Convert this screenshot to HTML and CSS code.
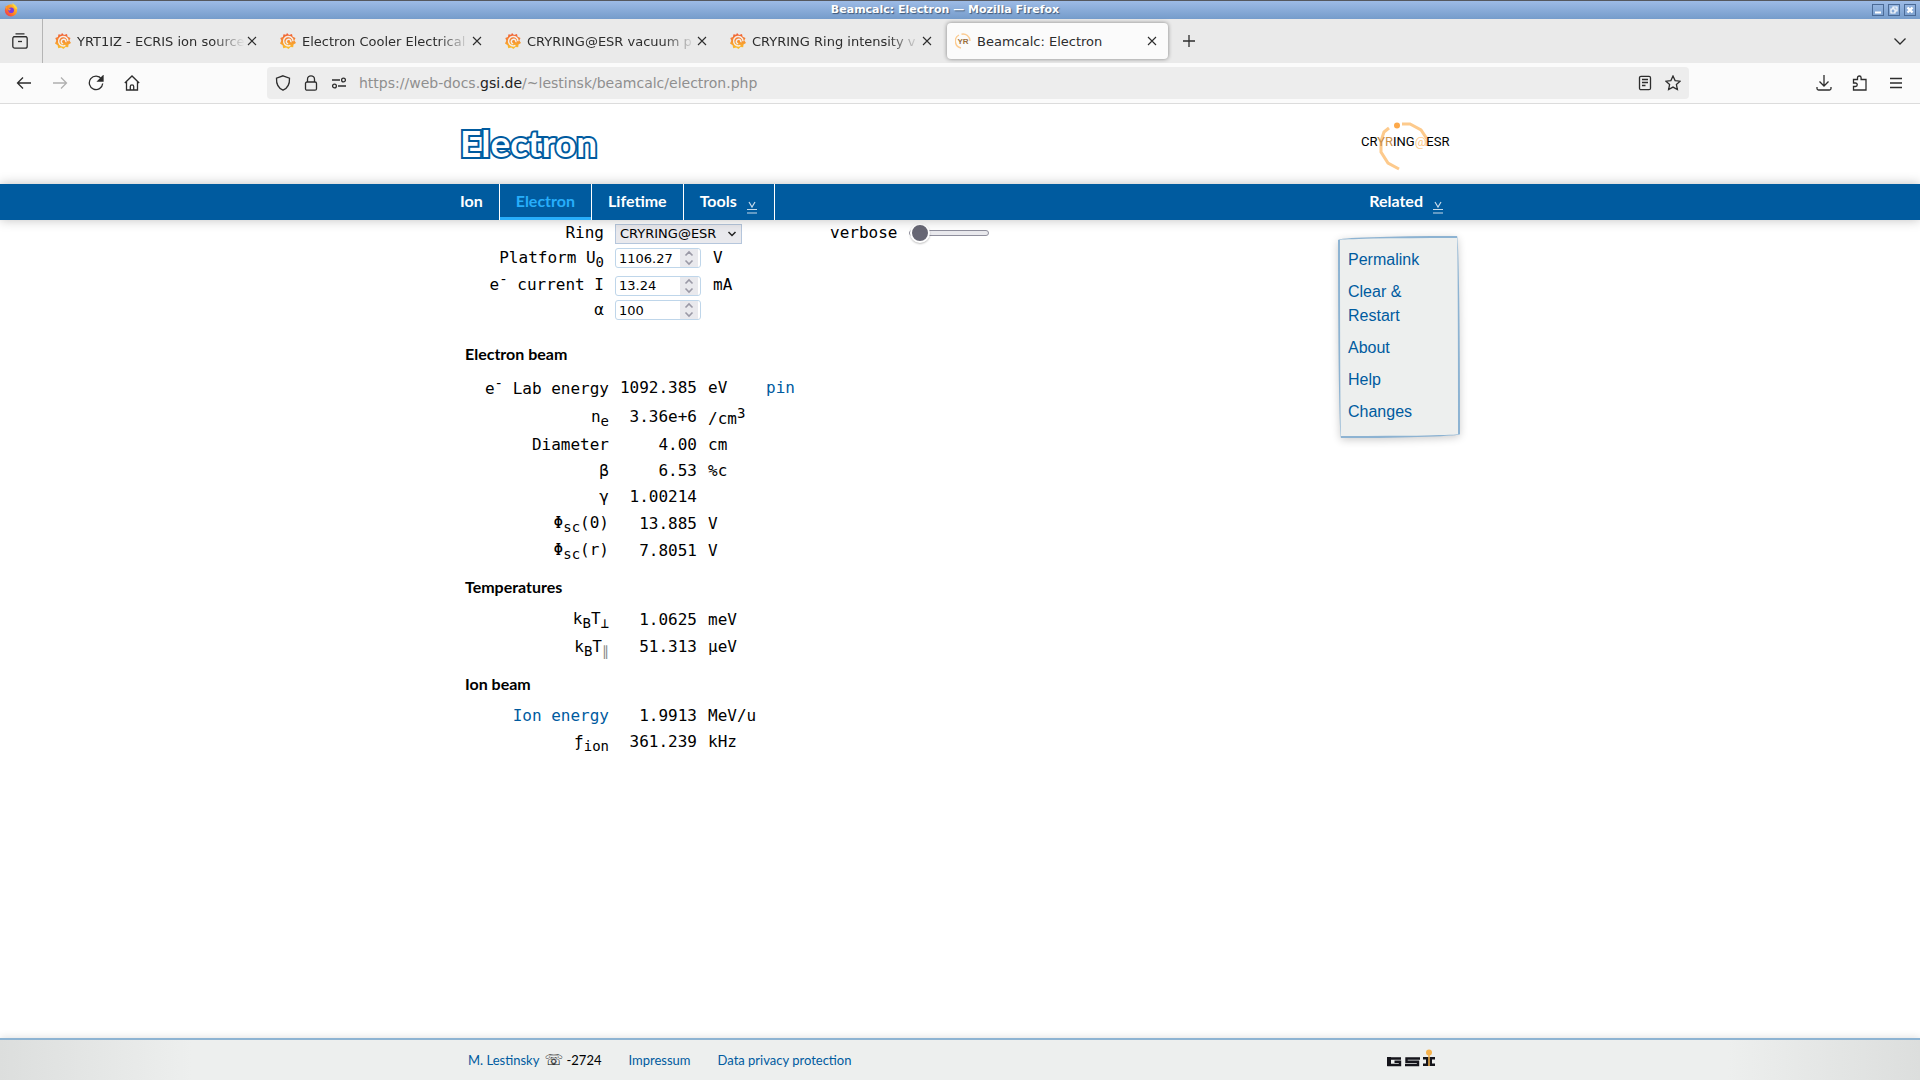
FILE: index.html
```html
<!DOCTYPE html>
<html lang="en">
<head>
  <meta charset="UTF-8">
  <title>Beamcalc: Electron</title>
  <link rel="stylesheet" href="styles.css">
</head>
<body>

  <!-- shared icons -->
  <svg class="defs" aria-hidden="true">
    <defs>
      <linearGradient id="orange" x1="0" y1="0" x2="0" y2="1">
        <stop offset="0" stop-color="#f05a36"/>
        <stop offset="1" stop-color="#fcc32c"/>
      </linearGradient>
      <linearGradient id="fox" x1="1" y1="0" x2="0" y2="1">
        <stop offset="0" stop-color="#ffe03c"/>
        <stop offset="0.5" stop-color="#ff8a1e"/>
        <stop offset="1" stop-color="#f0205a"/>
      </linearGradient>
      <symbol id="grafana" viewBox="0 0 16 16">
        <path d="M7 0l2 2 3-1 .6 2.8L15.500 5l-1.200 2.600L16 10l-2.500 1.400-.3 2.800-2.700-.2L8.500 16l-2.300-1.600-3 .9-.6-3L0 10.500l1.300-2.700L.3 5l2.600-.9L3.500 1.200l2.600.6z" fill="url(#orange)"/>
        <path d="M13 8.200a4.700 4.700 0 1 0-2.600 4.200M10.800 9.200a2.300 2.300 0 1 0-2.600 1.600" fill="none" stroke="#f3efe9" stroke-width="1.500"/>
      </symbol>
      <symbol id="close" viewBox="0 0 10 10">
        <path d="M1 1l8 8M9 1l-8 8" fill="none" stroke="currentColor" stroke-width="1.100"/>
      </symbol>
      <symbol id="spin" viewBox="0 0 18 18">
        <path d="M5.500 6.500L9 3l3.500 3.500M5.500 11.500L9 15l3.500-3.500" fill="none" stroke="#9a99a6" stroke-width="1.600"/>
      </symbol>
      <symbol id="dropdown" viewBox="0 0 12 13">
        <path d="M3 1l3 5 3-5M1 8.500h10M1 12h10" fill="none" stroke="#c5daea" stroke-width="1.200"/>
      </symbol>
    </defs>
  </svg>

  <div class="titlebar">
    <svg class="fox" viewBox="0 0 16 16">
      <circle cx="8" cy="8.500" r="7" fill="url(#fox)"/>
      <path d="M9 0c3 1 6 4 6.500 7l-3-1z" fill="#ffd93b"/>
      <path d="M1.500 3l2.500 1.500L3 8z" fill="#ff9a24"/>
      <circle cx="8.200" cy="8.200" r="3.200" fill="#7a3ae0"/>
      <path d="M4 6l4 .8-2 2z" fill="#ffa02a"/>
    </svg>
    <div class="window-title">Beamcalc: Electron — Mozilla Firefox</div>
    <div class="window-buttons">
      <button aria-label="Minimize"><svg viewBox="0 0 10 10"><path d="M2 7.500h6" stroke="#fff" stroke-width="2"/></svg></button>
      <button aria-label="Restore"><svg viewBox="0 0 10 10"><path d="M4 4V2h4v4H6M2 4h4v4H2z" fill="none" stroke="#fff" stroke-width="1.200"/></svg></button>
      <button aria-label="Close"><svg viewBox="0 0 10 10"><path d="M2.500 2.500l5 5M7.500 2.500l-5 5" stroke="#fff" stroke-width="2.400"/></svg></button>
    </div>
  </div>

  <div class="tabstrip">
    <button class="view-btn" aria-label="Firefox View">
      <svg viewBox="0 0 16 16"><path d="M3.500 .8h9M1.500 3.700h13" /><rect x=".8" y="3.700" width="14.400" height="11.500" rx="2"/><path d="M6 8.500h4"/></svg>
    </button>
    <div class="tab">
      <svg class="favicon"><use href="#grafana"/></svg>
      <span class="tab-label">YRT1IZ - ECRIS ion source</span>
      <button class="tab-close" aria-label="Close tab"><svg><use href="#close"/></svg></button>
    </div>
    <div class="tab">
      <svg class="favicon"><use href="#grafana"/></svg>
      <span class="tab-label">Electron Cooler Electrical</span>
      <button class="tab-close" aria-label="Close tab"><svg><use href="#close"/></svg></button>
    </div>
    <div class="tab">
      <svg class="favicon"><use href="#grafana"/></svg>
      <span class="tab-label">CRYRING@ESR vacuum p</span>
      <button class="tab-close" aria-label="Close tab"><svg><use href="#close"/></svg></button>
    </div>
    <div class="tab">
      <svg class="favicon"><use href="#grafana"/></svg>
      <span class="tab-label">CRYRING Ring intensity v</span>
      <button class="tab-close" aria-label="Close tab"><svg><use href="#close"/></svg></button>
    </div>
    <div class="tab active">
      <svg class="favicon" viewBox="0 0 16 16">
        <path d="M6 15A7 7 0 0 1 4 2M6.500 1.200A7 7 0 0 1 15 8" fill="none" stroke="#fccb90" stroke-width="1.400"/>
        <text x="8" y="11" class="favicon-text">YR</text>
      </svg>
      <span class="tab-label">Beamcalc: Electron</span>
      <button class="tab-close" aria-label="Close tab"><svg><use href="#close"/></svg></button>
    </div>
    <button class="new-tab" aria-label="New tab"><svg viewBox="0 0 12 12"><path d="M6 0v12M0 6h12"/></svg></button>
    <button class="all-tabs" aria-label="List all tabs"><svg viewBox="0 0 12 12"><path d="M.5 3.500L6 9l5.500-5.500"/></svg></button>
  </div>

  <div class="toolbar">
    <div class="nav-buttons">
      <button aria-label="Back"><svg viewBox="0 0 16 16"><path d="M15 8H1.500M7 2.500L1.500 8 7 13.500"/></svg></button>
      <button aria-label="Forward" disabled><svg viewBox="0 0 16 16"><path d="M1 8h13.500M9 2.500L14.500 8 9 13.500"/></svg></button>
      <button aria-label="Reload"><svg viewBox="0 0 16 16"><path d="M13.500 4A6.700 6.700 0 1 0 14.700 8.500"/><path d="M15 1v5h-5z" class="solid"/></svg></button>
      <button aria-label="Home"><svg viewBox="0 0 16 16"><path d="M.8 8L8 1l7.200 7M2.500 6.800V15h11V6.800M6.300 15v-3.500a1.700 1.700 0 0 1 3.400 0V15"/></svg></button>
    </div>
    <div class="urlbar">
      <svg viewBox="0 0 16 16"><path d="M8 .8l6.500 2.400c.3 6-2 10-6.500 12-4.500-2-6.800-6-6.500-12z"/></svg>
      <svg viewBox="0 0 16 16"><rect x="2.500" y="7" width="11" height="8.200" rx="1.500"/><path d="M4.500 7V4.300a3.500 3.500 0 0 1 7 0V7"/></svg>
      <svg viewBox="0 0 16 16"><path d="M1 5h8M7 11h8"/><circle cx="12.500" cy="5" r="1.900"/><circle cx="3.500" cy="11" r="1.900"/></svg>
      <div class="url">https://web-docs.<b>gsi.de</b>/~lestinsk/beamcalc/electron.php</div>
      <svg viewBox="0 0 16 16"><rect x="2.500" y="1.300" width="11" height="13.400" rx="1.500"/><path d="M5 4.500h6M5 7.500h6M5 10.500h3.500"/></svg>
      <svg viewBox="0 0 16 16"><path d="M8 1l2.100 4.600 5 .6-3.700 3.400 1 5L8 12.100l-4.400 2.500 1-5L.9 6.200l5-.6z"/></svg>
    </div>
    <div class="tool-buttons">
      <button aria-label="Downloads"><svg viewBox="0 0 16 16"><path d="M8 0v10.500M3.500 6.500L8 11l4.500-4.500M1 12v1.500A1.500 1.500 0 0 0 2.500 15h11a1.500 1.500 0 0 0 1.500-1.500V12"/></svg></button>
      <button aria-label="Extensions"><svg viewBox="0 0 16 16"><path d="M1.500 15V11.500h2a1.700 1.700 0 0 0 0-3.500h-2V4.500h4V2.800a1.800 1.800 0 0 1 3.600 0v1.700H14V15z"/></svg></button>
      <button aria-label="Menu"><svg viewBox="0 0 16 16"><path d="M2 3.500h12M2 8h12M2 12.500h12"/></svg></button>
    </div>
  </div>

  <header>
    <div class="wrap header-row">
      <h1>Electron</h1>
      <svg class="ring-logo" viewBox="0 0 92 50" role="img" aria-label="CRYRING@ESR">
        <path d="M28 6L23 10 20 19V30L27 41 38 47M41 2H49L60 8 66 17V24" fill="none" stroke="#fdca8c" stroke-width="3"/>
        <circle cx="36" cy="3.500" r="3" fill="#fda94a"/>
        <text x="0" y="24">CR<tspan fill="#c98f48">YR</tspan>ING<tspan fill="#fdca8c">@</tspan>ESR</text>
      </svg>
    </div>
  </header>

  <nav>
    <div class="wrap nav-row">
      <a href="#" class="first">Ion</a>
      <a href="#" class="current">Electron</a>
      <a href="#">Lifetime</a>
      <a href="#">Tools <svg><use href="#dropdown"/></svg></a>
      <a href="#" class="related">Related <svg><use href="#dropdown"/></svg></a>
    </div>
  </nav>

  <main class="wrap">
    <div class="calc">
      <form class="inputs">
        <label for="ring">Ring</label>
        <div class="field">
          <div class="select-box">
            <select id="ring"><option>CRYRING@ESR</option></select>
            <svg viewBox="0 0 10 10"><path d="M1.500 3L5 6.500 8.500 3" fill="none" stroke="#222" stroke-width="1.500"/></svg>
          </div>
        </div>
        <label for="platform">Platform U<sub>0</sub></label>
        <div class="field">
          <div class="number-box"><input type="number" id="platform" value="1106.27" step="any"><svg><use href="#spin"/></svg></div>
          <span>V</span>
        </div>
        <label for="current">e<sup>-</sup> current I</label>
        <div class="field">
          <div class="number-box"><input type="number" id="current" value="13.24" step="any"><svg><use href="#spin"/></svg></div>
          <span>mA</span>
        </div>
        <label for="alpha">α</label>
        <div class="field">
          <div class="number-box"><input type="number" id="alpha" value="100"><svg><use href="#spin"/></svg></div>
        </div>
      </form>

      <h2>Electron beam</h2>
      <table>
        <tr><th>e<sup>-</sup> Lab energy</th><td class="value">1092.385</td><td class="unit">eV</td><td><a href="#">pin</a></td></tr>
        <tr><th>n<sub>e</sub></th><td class="value">3.36e+6</td><td class="unit">/cm<sup>3</sup></td></tr>
        <tr><th>Diameter</th><td class="value">4.00</td><td class="unit">cm</td></tr>
        <tr><th>β</th><td class="value">6.53</td><td class="unit">%c</td></tr>
        <tr><th>γ</th><td class="value">1.00214</td><td class="unit"></td></tr>
        <tr><th>Φ<sub>sc</sub>(0)</th><td class="value">13.885</td><td class="unit">V</td></tr>
        <tr><th>Φ<sub>sc</sub>(r)</th><td class="value">7.8051</td><td class="unit">V</td></tr>
      </table>

      <h2>Temperatures</h2>
      <table>
        <tr><th>k<sub>B</sub>T<sub>⊥</sub></th><td class="value">1.0625</td><td class="unit">meV</td></tr>
        <tr><th>k<sub>B</sub>T<sub class="parallel">∥</sub></th><td class="value">51.313</td><td class="unit">µeV</td></tr>
      </table>

      <h2>Ion beam</h2>
      <table>
        <tr><th><a href="#">Ion energy</a></th><td class="value">1.9913</td><td class="unit">MeV/u</td></tr>
        <tr><th>ƒ<sub>ion</sub></th><td class="value">361.239</td><td class="unit">kHz</td></tr>
      </table>
    </div>

    <div class="verbose">
      <label for="verbose">verbose</label>
      <input type="range" id="verbose" min="0" max="3" value="0">
    </div>

    <ul class="side-menu">
      <li><a href="#">Permalink</a></li>
      <li><a href="#">Clear &amp; Restart</a></li>
      <li><a href="#">About</a></li>
      <li><a href="#">Help</a></li>
      <li><a href="#">Changes</a></li>
    </ul>
  </main>

  <footer>
    <div class="wrap footer-row">
      <div><a href="#">M. Lestinsky</a> <span class="phone">☏</span> -2724</div>
      <a href="#">Impressum</a>
      <a href="#">Data privacy protection</a>
      <svg class="gsi-logo" viewBox="0 0 50 18" role="img" aria-label="GSI">
        <path d="M15 9.500H2.500V16H14V12.800H8.500M34 9.500H20.500V12.800H32V16H19" fill="none" stroke="#15151b" stroke-width="2.400"/>
        <path d="M1 8h4v9H1zM37 8h12v2.500h-3v4h3V17H37v-2.500h3v-4h-3z" fill="#15151b"/>
        <path d="M43 5v12" stroke="#f6b24c" stroke-width="1.500"/>
        <circle cx="43" cy="3.500" r="3" fill="#f6b24c"/>
      </svg>
    </div>
  </footer>

</body>
</html>
```
FILE: styles.css
```css
* {
  box-sizing: border-box;
}

body {
  margin: 0;
  min-height: 100vh;
  display: flex;
  flex-direction: column;
  background: #fff;
  color: #000;
  font-family: "DejaVu Sans Mono", monospace;
  font-size: 16px;
}

button {
  padding: 0;
  border: none;
  background: none;
  color: inherit;
  display: flex;
  align-items: center;
  justify-content: center;
}

a {
  color: #005b9f;
  text-decoration: none;
}

.defs {
  position: absolute;
  width: 0;
  height: 0;
}

/* window frame */
.titlebar {
  height: 19px;
  padding: 0 4px;
  display: flex;
  align-items: center;
  border-top: 1px solid #55585e;
  background: linear-gradient(#9dbbe6, #759ccb);
}

.fox {
  width: 14px;
  height: 14px;
}

.window-title {
  flex: 1;
  padding-bottom: 1px;
  text-align: center;
  color: #fff;
  font: bold 11px "DejaVu Sans", sans-serif;
  text-shadow: 1px 1px 1px #3d5878;
}

.window-buttons {
  display: flex;
  gap: 4px;
}

.window-buttons button {
  width: 12px;
  height: 12px;
  border: 1px solid #4a6a96;
}

.window-buttons svg {
  width: 10px;
  height: 10px;
}

/* tabs */
.tabstrip {
  height: 44px;
  display: flex;
  align-items: center;
  background: #eaeaea;
  color: #2d2d2d;
  font: 13px "DejaVu Sans", sans-serif;
}

.tabstrip > button svg,
.toolbar svg {
  fill: none;
  stroke: currentColor;
  stroke-width: 1.3;
}

.view-btn {
  width: 43px;
  height: 44px;
  padding-right: 2px;
  border-right: 1px solid #b5b5b5;
}

.view-btn svg {
  width: 16px;
  height: 16px;
}

.tab {
  width: 221px;
  height: 36px;
  margin-left: 4px;
  padding: 0 11px 0 8px;
  display: flex;
  align-items: center;
  gap: 2px;
  border-radius: 4px;
}

.tab.active {
  background: #fbfbfb;
  box-shadow: 0 0 4px rgba(0, 0, 0, 0.45);
}

.favicon {
  width: 16px;
  height: 16px;
  flex: none;
}

.favicon-text {
  font: bold 8px "Liberation Sans", sans-serif;
  fill: #9a7040;
  text-anchor: middle;
}

.tab-label {
  flex: 1;
  padding-left: 4px;
  overflow: hidden;
  white-space: nowrap;
  mask-image: linear-gradient(to left, transparent, #000 32px);
}

.tab.active .tab-label {
  mask-image: none;
}

.tab-close svg {
  width: 10px;
  height: 10px;
}

.new-tab {
  width: 42px;
}

.new-tab svg,
.all-tabs svg {
  width: 12px;
  height: 12px;
}

.all-tabs {
  margin: 0 14px 0 auto;
}

/* address bar */
.toolbar {
  height: 41px;
  display: flex;
  align-items: center;
  border-bottom: 1px solid #dcdcdc;
  background: #fbfbfb;
  color: #2d2d2d;
}

.toolbar svg {
  width: 16px;
  height: 16px;
  flex: none;
}

.toolbar .solid {
  fill: currentColor;
}

.nav-buttons {
  width: 267px;
  padding-left: 16px;
  display: flex;
  gap: 20px;
}

.nav-buttons button:disabled {
  color: #b0b0b0;
}

.urlbar {
  flex: 1;
  height: 32px;
  padding: 0 8px;
  display: flex;
  align-items: center;
  gap: 12px;
  border-radius: 4px;
  background: #ededed;
}

.url {
  flex: 1;
  color: #8f8f8f;
  font: 14px "DejaVu Sans", sans-serif;
}

.url b {
  color: #222;
  font-weight: normal;
}

.tool-buttons {
  width: 231px;
  padding-right: 16px;
  display: flex;
  justify-content: flex-end;
  gap: 20px;
}

/* page header */
.wrap {
  width: 100%;
  max-width: 1000px;
  margin: 0 auto;
}

.header-row {
  height: 80px;
  display: flex;
  align-items: center;
  justify-content: space-between;
  padding-right: 7px;
}

h1 {
  margin: 0 0 4px;
  color: #fff;
  font: bold 37px Lato, sans-serif;
  -webkit-text-stroke: 4px #005b9f;
  paint-order: stroke fill;
}

.ring-logo {
  width: 92px;
  height: 50px;
  margin-top: 6px;
}

.ring-logo text {
  font: 13px Roboto, sans-serif;
}

nav {
  background: #005b9f;
  box-shadow: 0 0 12px rgba(0, 0, 0, 0.25);
  z-index: 1;
}

.nav-row {
  display: flex;
}

.nav-row a {
  height: 36px;
  padding: 0 16px 3px;
  display: flex;
  align-items: center;
  border-right: 1px solid #fff;
  color: #fff;
  font: bold 16px Lato, sans-serif;
}

.nav-row svg {
  width: 12px;
  height: 13px;
  margin: 14px 0 0 9px;
}

.nav-row .first {
  padding-left: 0;
}

.nav-row .current {
  color: #27aefb;
  box-shadow: inset 0 -3px #27aefb;
}

.nav-row .related {
  margin-left: auto;
  border-right: none;
}

/* calculator */
main {
  flex: 1;
  display: grid;
  grid-template-columns: 370px 1fr 122px;
  align-items: start;
}

.inputs {
  display: grid;
  grid-template-columns: 144px 1fr;
  column-gap: 11px;
  align-items: baseline;
  padding-top: 3px;
  line-height: 20px;
}

.inputs label {
  text-align: right;
}

.field {
  display: flex;
  align-items: baseline;
  gap: 12px;
  padding-bottom: 4px;
}

.select-box {
  width: 127px;
  height: 20px;
  display: grid;
  align-items: center;
  border: 1px solid #b5c6dc;
  background: #e9e9ed;
}

.select-box select,
.select-box svg {
  grid-area: 1 / 1;
}

.select-box select {
  height: 18px;
  padding: 0 4px;
  border: none;
  background: none;
  appearance: none;
  color: #000;
  font: 13px "DejaVu Sans", sans-serif;
}

.select-box svg {
  width: 10px;
  height: 10px;
  justify-self: end;
  margin-right: 4px;
  pointer-events: none;
}

.number-box {
  width: 86px;
  height: 20px;
  padding: 0 2px;
  display: flex;
  align-items: center;
  border: 1px solid #bfd6ea;
  border-radius: 3px;
}

.number-box input {
  flex: 1;
  min-width: 0;
  height: 18px;
  padding: 0 1px;
  border: none;
  background: none;
  appearance: textfield;
  color: #000;
  font: 13px "DejaVu Sans", sans-serif;
}

.number-box input::-webkit-inner-spin-button {
  display: none;
}

.number-box svg {
  width: 18px;
  height: 18px;
  background: #e9e9ed;
}

h2 {
  margin: 0 0 7px;
  padding-left: 5px;
  font: bold 16px/24px Lato, sans-serif;
}

.inputs + h2 {
  margin-top: 18px;
}

table {
  margin-bottom: 11px;
  border-collapse: collapse;
  line-height: 20px;
}

th {
  width: 149px;
  padding: 3px 0;
  font-weight: normal;
  text-align: right;
}

td {
  padding: 3px 0;
}

.value {
  width: 88px;
  text-align: right;
}

.unit {
  width: 69px;
  padding-left: 11px;
}

sub,
sup {
  font-size: 14px;
  line-height: 14px;
}

.parallel {
  color: #888;
}

.verbose {
  display: flex;
  align-items: center;
  gap: 12px;
  padding-top: 3px;
  line-height: 20px;
}

.verbose input {
  width: 80px;
  height: 18px;
  margin: 0;
  appearance: none;
  background: none;
}

.verbose input::-webkit-slider-runnable-track {
  height: 6px;
  border: 1px solid #8f8f9d;
  border-radius: 3px;
  background: #e9e9ed;
}

.verbose input::-webkit-slider-thumb {
  appearance: none;
  width: 20px;
  height: 20px;
  margin-top: -8px;
  border: 2px solid #fff;
  border-radius: 50%;
  background: #676774;
  box-shadow: 0 1px 2px rgba(0, 0, 0, 0.25);
}

.side-menu {
  margin: 16px 0 0;
  padding: 6px 24px 8px 8px;
  list-style: none;
  border: 2px solid #8db3d2;
  border-radius: 115px 3px 115px 3px / 4px 195px 4px 195px;
  background: #edefee;
  box-shadow: 0 2px 8px rgba(0, 0, 0, 0.2);
  font: 16px/24px "Liberation Sans", sans-serif;
}

.side-menu li {
  padding: 4px 0;
}

/* page footer */
footer {
  border-top: 2px solid #8db3d2;
  background: linear-gradient(to right, #dcdedd, #edefee 10%, #edefee 90%, #dcdedd);
  box-shadow: 0 0 8px rgba(0, 0, 0, 0.15);
  font: 13px Lato, sans-serif;
}

.footer-row {
  height: 40px;
  padding: 0 24px 1px 8px;
  display: flex;
  align-items: center;
  gap: 27px;
}

.phone {
  margin-left: 2px;
  font: 15px "DejaVu Sans", sans-serif;
}

.gsi-logo {
  width: 50px;
  height: 18px;
  margin: 0 0 4px auto;
}
```
